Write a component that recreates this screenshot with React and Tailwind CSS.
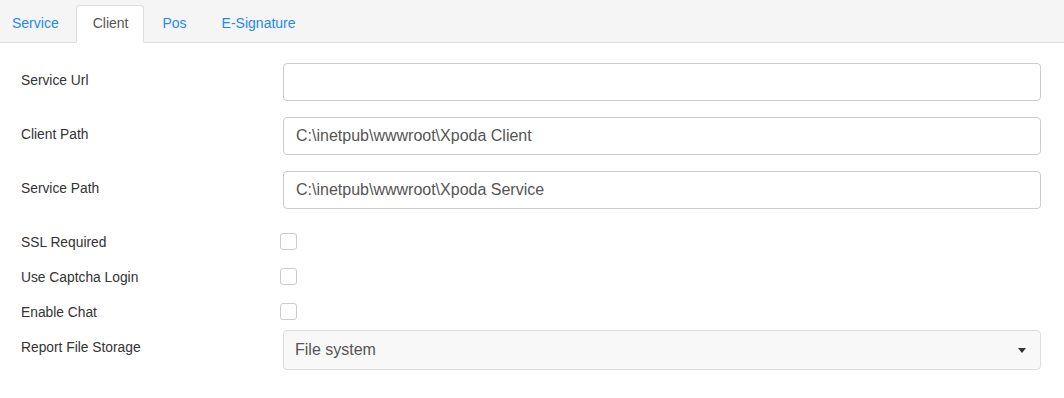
import React, { useState } from "react";

const tabs = ["Service", "Client", "Pos", "E-Signature"];

export default function App() {
  const [active, setActive] = useState("Client");
  const [form, setForm] = useState({
    serviceUrl: "",
    clientPath: "C:\\inetpub\\wwwroot\\Xpoda Client",
    servicePath: "C:\\inetpub\\wwwroot\\Xpoda Service",
    ssl: false,
    captcha: false,
    chat: false,
    storage: "File system",
  });

  return (
    <div className="w-[1064px] h-[398px] bg-white font-['Liberation_Sans',Arial,sans-serif]">
      {/* Tabs */}
      <div className="h-[43px] bg-[#f5f5f5] border-b border-[#dddddd] flex items-end">
        {tabs.map((t, i) => (
          <button
            key={t}
            onClick={() => setActive(t)}
            className={
              active === t
                ? "h-[38px] -mb-px pl-[16px] pr-[15px] pb-[2px] bg-white border border-[#dddddd] border-b-white rounded-t-[4px] text-[14px] text-[#555555]"
                : i === 0
                ? "h-[38px] -mb-px pl-[11px] pr-[16px] pb-[2px] border border-transparent text-[14px] text-[#1e88f5]"
                : "h-[38px] -mb-px pl-[17px] pr-[16px] pb-[2px] border border-transparent text-[14px] text-[#1e88f5]"
            }
          >
            {t}
          </button>
        ))}
      </div>

      {/* Form */}
      <div className="pl-[21px] pr-[23px] pt-[20px] text-[13.8px] text-[#333333]">
        <div className="flex flex-col gap-[16px]">
          <Row label="Service Url">
            <TextInput value={form.serviceUrl} onChange={(v) => setForm((f) => ({ ...f, serviceUrl: v }))} />
          </Row>
          <Row label="Client Path">
            <TextInput value={form.clientPath} onChange={(v) => setForm((f) => ({ ...f, clientPath: v }))} />
          </Row>
          <Row label="Service Path">
            <TextInput value={form.servicePath} onChange={(v) => setForm((f) => ({ ...f, servicePath: v }))} />
          </Row>
        </div>

        <div className="mt-[15px]">
          <CheckRow label="SSL Required" checked={form.ssl} onChange={(v) => setForm((f) => ({ ...f, ssl: v }))} />
          <CheckRow label="Use Captcha Login" checked={form.captcha} onChange={(v) => setForm((f) => ({ ...f, captcha: v }))} />
          <CheckRow label="Enable Chat" checked={form.chat} onChange={(v) => setForm((f) => ({ ...f, chat: v }))} />
        </div>

        <div className="mt-[1px] flex items-start">
          <label className="w-[262px] pt-[9px] leading-[18px]">Report File Storage</label>
          <div className="flex-1 h-[40px] rounded-[4px] border border-[#dddddd] bg-[#f8f8f8] flex items-center justify-between pl-[11px] pr-[14px]">
            <span className="text-[16px] text-[#555555]">{form.storage}</span>
            <svg width="8" height="5" viewBox="0 0 8 5">
              <path d="M0 0 H8 L4 5 Z" fill="#333333" />
            </svg>
          </div>
        </div>
      </div>
    </div>
  );
}

function Row({ label, children }) {
  return (
    <div className="flex items-start">
      <label className="w-[262px] pt-[9px] leading-[18px]">{label}</label>
      <div className="flex-1">{children}</div>
    </div>
  );
}

function TextInput({ value, onChange }) {
  return (
    <input
      type="text"
      value={value}
      onChange={(e) => onChange(e.target.value)}
      className="w-full h-[38px] rounded-[4px] border border-[#cccccc] px-[12px] text-[16px] text-[#555555] outline-none"
    />
  );
}

function CheckRow({ label, checked, onChange }) {
  return (
    <div className="h-[35px] flex items-center">
      <label className="w-[259px] leading-[18px] pt-[2px]">{label}</label>
      <input
        type="checkbox"
        checked={checked}
        onChange={(e) => onChange(e.target.checked)}
        className="appearance-none w-[17px] h-[17px] rounded-[3px] border border-[#cccccc] bg-white"
      />
    </div>
  );
}
